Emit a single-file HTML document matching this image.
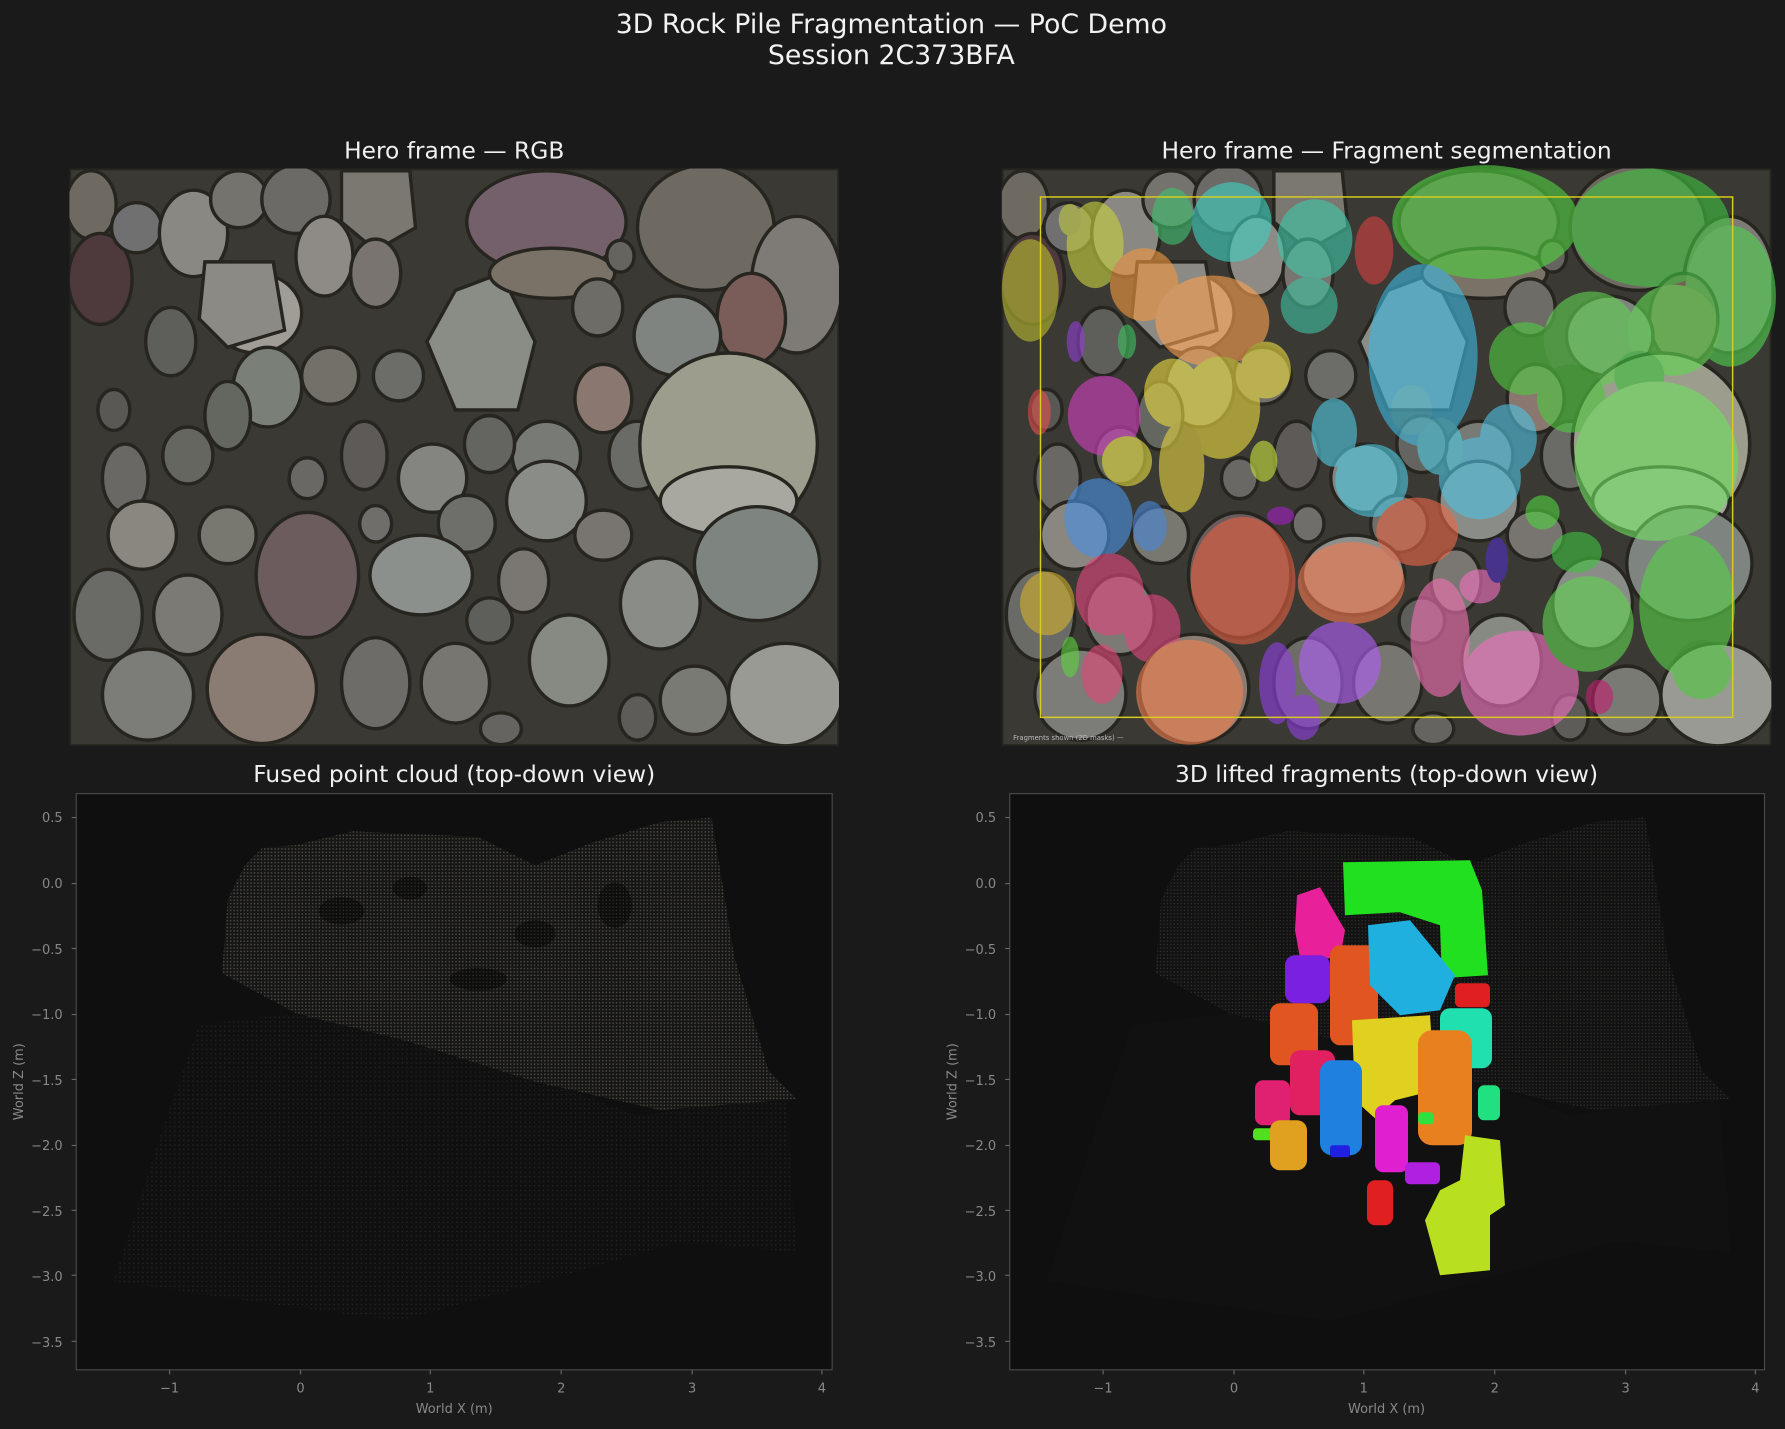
<!DOCTYPE html>
<html><head><meta charset="utf-8"><style>
html,body{margin:0;padding:0;background:#1a1a1a;}
svg{display:block;}
text{font-family:"DejaVu Sans","Liberation Sans",sans-serif;}
</style></head><body>
<svg width="1785" height="1429" viewBox="0 0 1568 1255" preserveAspectRatio="none" xmlns="http://www.w3.org/2000/svg">
<defs>
<clipPath id="imgclip"><rect x="61" y="148" width="676" height="507"/></clipPath>
<pattern id="dots" width="3" height="3" patternUnits="userSpaceOnUse"><rect width="3" height="3" fill="#161615"/><rect x="1" y="1" width="1.2" height="1.2" fill="#55524c"/></pattern>
<pattern id="dots2" width="4" height="4" patternUnits="userSpaceOnUse"><rect width="4" height="4" fill="#101010"/><rect x="1" y="1" width="1" height="1" fill="#2c2b28"/></pattern>
<pattern id="dots3" width="3" height="3" patternUnits="userSpaceOnUse"><rect width="3" height="3" fill="#121212"/><rect x="1" y="1" width="1.1" height="1.1" fill="#353431"/></pattern>
<g id="rocks" stroke="#26251f" stroke-width="3">
<rect x="61" y="148" width="676" height="507" fill="#3a3934"/>
<ellipse cx="80" cy="180" rx="22" ry="30" fill="#6e6a62"/>
<ellipse cx="88" cy="245" rx="28" ry="40" fill="#4e3a3c"/>
<ellipse cx="120" cy="200" rx="22" ry="22" fill="#707070"/>
<ellipse cx="170" cy="205" rx="30" ry="38" fill="#8a8882"/>
<ellipse cx="210" cy="175" rx="25" ry="25" fill="#75736d"/>
<ellipse cx="260" cy="175" rx="30" ry="30" fill="#6c6a66"/>
<polygon points="300,150 360,150 365,200 330,220 300,195" fill="#7a7870"/>
<ellipse cx="285" cy="225" rx="25" ry="35" fill="#8e8b86"/>
<ellipse cx="225" cy="275" rx="40" ry="35" fill="#a09d96"/>
<polygon points="180,230 240,230 250,290 200,305 175,280" fill="#8c8a85"/>
<ellipse cx="150" cy="300" rx="22" ry="30" fill="#5e5e5a"/>
<ellipse cx="330" cy="240" rx="22" ry="30" fill="#7a7470"/>
<polygon points="400,255 440,240 470,300 455,360 400,360 375,300" fill="#8a8c86"/>
<ellipse cx="480" cy="195" rx="70" ry="45" fill="#74606a"/>
<ellipse cx="485" cy="240" rx="55" ry="22" fill="#7a7266"/>
<ellipse cx="620" cy="200" rx="60" ry="55" fill="#6e6a62"/>
<ellipse cx="700" cy="250" rx="40" ry="60" fill="#7e7a76"/>
<ellipse cx="660" cy="280" rx="30" ry="40" fill="#7a5c58"/>
<ellipse cx="595" cy="295" rx="38" ry="35" fill="#7f8480"/>
<ellipse cx="525" cy="270" rx="22" ry="25" fill="#6e6c66"/>
<ellipse cx="235" cy="340" rx="30" ry="35" fill="#7a8078"/>
<ellipse cx="200" cy="365" rx="20" ry="30" fill="#646660"/>
<ellipse cx="290" cy="330" rx="25" ry="25" fill="#727068"/>
<ellipse cx="350" cy="330" rx="22" ry="22" fill="#6c6c68"/>
<ellipse cx="530" cy="350" rx="25" ry="30" fill="#8a7870"/>
<ellipse cx="560" cy="400" rx="25" ry="30" fill="#6a6a66"/>
<ellipse cx="640" cy="390" rx="78" ry="80" fill="#9c9d8c"/>
<ellipse cx="640" cy="440" rx="60" ry="30" fill="#a8a8a0"/>
<ellipse cx="480" cy="400" rx="30" ry="30" fill="#787a76"/>
<ellipse cx="430" cy="390" rx="22" ry="25" fill="#646460"/>
<ellipse cx="380" cy="420" rx="30" ry="30" fill="#848480"/>
<ellipse cx="320" cy="400" rx="20" ry="30" fill="#5e5a58"/>
<ellipse cx="165" cy="400" rx="22" ry="25" fill="#666660"/>
<ellipse cx="110" cy="420" rx="20" ry="30" fill="#6a6864"/>
<ellipse cx="125" cy="470" rx="30" ry="30" fill="#8a8680"/>
<ellipse cx="480" cy="440" rx="35" ry="35" fill="#8a8c88"/>
<ellipse cx="410" cy="460" rx="25" ry="25" fill="#6e6e6a"/>
<ellipse cx="270" cy="505" rx="45" ry="55" fill="#6c5c5e"/>
<ellipse cx="370" cy="505" rx="45" ry="35" fill="#8c908c"/>
<ellipse cx="200" cy="470" rx="25" ry="25" fill="#787870"/>
<ellipse cx="165" cy="540" rx="30" ry="35" fill="#7c7a74"/>
<ellipse cx="95" cy="540" rx="30" ry="40" fill="#6a6a66"/>
<ellipse cx="460" cy="510" rx="22" ry="28" fill="#7a7672"/>
<ellipse cx="530" cy="470" rx="25" ry="22" fill="#787470"/>
<ellipse cx="665" cy="495" rx="55" ry="50" fill="#7e8480"/>
<ellipse cx="580" cy="530" rx="35" ry="40" fill="#8a8c88"/>
<ellipse cx="500" cy="580" rx="35" ry="40" fill="#868a82"/>
<ellipse cx="230" cy="605" rx="48" ry="48" fill="#8a7c72"/>
<ellipse cx="130" cy="610" rx="40" ry="40" fill="#7c7c78"/>
<ellipse cx="330" cy="600" rx="30" ry="40" fill="#6e6c68"/>
<ellipse cx="400" cy="600" rx="30" ry="35" fill="#787670"/>
<ellipse cx="690" cy="610" rx="50" ry="45" fill="#9a9a94"/>
<ellipse cx="610" cy="615" rx="30" ry="30" fill="#7a7a74"/>
<ellipse cx="430" cy="545" rx="20" ry="20" fill="#5e5e5a"/>
<ellipse cx="100" cy="360" rx="14" ry="18" fill="#5a5854"/>
<ellipse cx="270" cy="420" rx="16" ry="18" fill="#6a6864"/>
<ellipse cx="545" cy="225" rx="12" ry="14" fill="#66645e"/>
<ellipse cx="330" cy="460" rx="14" ry="16" fill="#706e6a"/>
<ellipse cx="440" cy="640" rx="18" ry="14" fill="#666460"/>
<ellipse cx="560" cy="630" rx="16" ry="20" fill="#5e5c58"/>
</g>
</defs>

<text x="783" y="29" font-size="23.5" fill="#f2f2f2" text-anchor="middle">3D Rock Pile Fragmentation — PoC Demo</text>
<text x="783" y="56" font-size="23.5" fill="#f2f2f2" text-anchor="middle">Session 2C373BFA</text>

<text x="399" y="139" font-size="20.5" fill="#f0f0f0" text-anchor="middle">Hero frame — RGB</text>
<text x="1218" y="139" font-size="20.5" fill="#f0f0f0" text-anchor="middle">Hero frame — Fragment segmentation</text>

<g clip-path="url(#imgclip)"><use href="#rocks"/></g>
<g transform="translate(819,0)"><g clip-path="url(#imgclip)"><use href="#rocks"/></g></g>

<g opacity="0.62">
<ellipse cx="905" cy="255" rx="25" ry="45" fill="#b8b830"/>
<ellipse cx="962" cy="215" rx="25" ry="38" fill="#c8d040"/>
<ellipse cx="940" cy="193" rx="10" ry="14" fill="#c0c840"/>
<ellipse cx="1030" cy="190" rx="18" ry="25" fill="#40c070"/>
<ellipse cx="1082" cy="195" rx="35" ry="35" fill="#40d0c0"/>
<ellipse cx="1155" cy="210" rx="33" ry="35" fill="#40c8a8"/>
<ellipse cx="1150" cy="268" rx="25" ry="25" fill="#40c0a0"/>
<ellipse cx="1207" cy="220" rx="17" ry="30" fill="#d04040"/>
<ellipse cx="1305" cy="195" rx="82" ry="50" fill="#50d040"/>
<ellipse cx="1450" cy="200" rx="70" ry="52" fill="#40c040"/>
<ellipse cx="1520" cy="260" rx="40" ry="62" fill="#50d050"/>
<ellipse cx="1005" cy="250" rx="30" ry="32" fill="#f09840"/>
<ellipse cx="1065" cy="282" rx="50" ry="40" fill="#f8a050"/>
<ellipse cx="1250" cy="312" rx="48" ry="80" fill="#40b8e0"/>
<ellipse cx="945" cy="300" rx="8" ry="18" fill="#9040d0"/>
<ellipse cx="990" cy="300" rx="8" ry="15" fill="#40c060"/>
<ellipse cx="970" cy="365" rx="32" ry="35" fill="#d040c0"/>
<ellipse cx="1030" cy="345" rx="25" ry="30" fill="#e8d840"/>
<ellipse cx="1072" cy="358" rx="35" ry="45" fill="#e8d840"/>
<ellipse cx="1112" cy="325" rx="22" ry="25" fill="#e8d840"/>
<ellipse cx="990" cy="405" rx="22" ry="22" fill="#e0d840"/>
<ellipse cx="1038" cy="410" rx="20" ry="40" fill="#e0d040"/>
<ellipse cx="1110" cy="405" rx="12" ry="18" fill="#c8e040"/>
<ellipse cx="1340" cy="315" rx="32" ry="32" fill="#50c840"/>
<ellipse cx="1398" cy="298" rx="42" ry="42" fill="#60d050"/>
<ellipse cx="1470" cy="290" rx="40" ry="40" fill="#60d850"/>
<ellipse cx="1440" cy="330" rx="22" ry="22" fill="#40c040"/>
<ellipse cx="1380" cy="350" rx="30" ry="30" fill="#50c840"/>
<ellipse cx="1455" cy="405" rx="72" ry="70" fill="#70e060"/>
<ellipse cx="1172" cy="380" rx="20" ry="30" fill="#50c8e0"/>
<ellipse cx="1205" cy="422" rx="32" ry="32" fill="#50c8e0"/>
<ellipse cx="1300" cy="420" rx="36" ry="36" fill="#50c0e0"/>
<ellipse cx="1325" cy="385" rx="25" ry="30" fill="#50c0e0"/>
<ellipse cx="1265" cy="392" rx="20" ry="25" fill="#50c8e0"/>
<ellipse cx="1240" cy="360" rx="18" ry="22" fill="#50c0d8"/>
<ellipse cx="965" cy="455" rx="30" ry="35" fill="#4890e0"/>
<ellipse cx="1010" cy="462" rx="15" ry="22" fill="#4888d8"/>
<ellipse cx="1092" cy="510" rx="46" ry="56" fill="#e06040"/>
<ellipse cx="1187" cy="512" rx="47" ry="36" fill="#f07850"/>
<ellipse cx="1245" cy="467" rx="36" ry="30" fill="#e86848"/>
<ellipse cx="975" cy="522" rx="30" ry="36" fill="#e04880"/>
<ellipse cx="1012" cy="552" rx="25" ry="30" fill="#e04880"/>
<ellipse cx="968" cy="592" rx="18" ry="26" fill="#e04878"/>
<ellipse cx="1045" cy="608" rx="47" ry="46" fill="#f08050"/>
<ellipse cx="1177" cy="582" rx="36" ry="36" fill="#b060f8"/>
<ellipse cx="1122" cy="600" rx="16" ry="36" fill="#9040e0"/>
<ellipse cx="1145" cy="630" rx="15" ry="20" fill="#9040e0"/>
<ellipse cx="1265" cy="560" rx="26" ry="52" fill="#f070b0"/>
<ellipse cx="1335" cy="600" rx="52" ry="46" fill="#f070c0"/>
<ellipse cx="1300" cy="515" rx="18" ry="15" fill="#f070c0"/>
<ellipse cx="1482" cy="532" rx="42" ry="62" fill="#58d048"/>
<ellipse cx="1395" cy="548" rx="40" ry="42" fill="#60d050"/>
<ellipse cx="1495" cy="588" rx="26" ry="26" fill="#50c840"/>
<ellipse cx="1385" cy="485" rx="22" ry="18" fill="#40c040"/>
<ellipse cx="1355" cy="450" rx="15" ry="15" fill="#50d040"/>
<ellipse cx="920" cy="530" rx="24" ry="28" fill="#d0b030"/>
<ellipse cx="940" cy="577" rx="8" ry="18" fill="#60d040"/>
<ellipse cx="1315" cy="492" rx="10" ry="20" fill="#5030c0"/>
<ellipse cx="1125" cy="453" rx="12" ry="8" fill="#a020c0"/>
<ellipse cx="913" cy="362" rx="10" ry="20" fill="#e05050"/>
<ellipse cx="1405" cy="612" rx="12" ry="15" fill="#c02070"/>
</g>
<rect x="914" y="173" width="608" height="457" fill="none" stroke="#d8cc20" stroke-width="1.3"/>
<text x="890" y="650" font-size="6" fill="#bbb">Fragments shown (2D masks) —</text>

<text x="399" y="687" font-size="20.5" fill="#f0f0f0" text-anchor="middle">Fused point cloud (top-down view)</text>
<text x="1218" y="687" font-size="20.5" fill="#f0f0f0" text-anchor="middle">3D lifted fragments (top-down view)</text>

<rect x="67" y="697" width="664" height="506" fill="#0f0f0f" stroke="#4a4a4a" stroke-width="1"/>
<polygon points="100,1125 140,1000 175,900 260,890 400,920 560,980 690,960 700,1100 600,1090 460,1130 350,1160 200,1140" fill="url(#dots2)"/>
<polygon points="230,745 260,742 310,730 420,735 470,760 520,740 580,722 625,718 632,760 645,840 675,940 700,965 580,975 470,950 360,915 260,890 195,855 200,790 215,760" fill="url(#dots)"/>
<g opacity="0.4" fill="#000"><ellipse cx="300" cy="800" rx="20" ry="12"/><ellipse cx="420" cy="860" rx="25" ry="10"/><ellipse cx="540" cy="795" rx="15" ry="20"/><ellipse cx="360" cy="780" rx="15" ry="10"/><ellipse cx="470" cy="820" rx="18" ry="12"/></g>

<g font-size="11.4" fill="#888" text-anchor="end">
<text x="55" y="722">0.5</text><text x="55" y="780">0.0</text><text x="55" y="838">−0.5</text><text x="55" y="895">−1.0</text><text x="55" y="953">−1.5</text><text x="55" y="1010">−2.0</text><text x="55" y="1068">−2.5</text><text x="55" y="1125">−3.0</text><text x="55" y="1183">−3.5</text>
</g>
<g stroke="#666"><line x1="63" y1="718" x2="67" y2="718"/><line x1="63" y1="776" x2="67" y2="776"/><line x1="63" y1="833" x2="67" y2="833"/><line x1="63" y1="891" x2="67" y2="891"/><line x1="63" y1="948" x2="67" y2="948"/><line x1="63" y1="1006" x2="67" y2="1006"/><line x1="63" y1="1063" x2="67" y2="1063"/><line x1="63" y1="1120" x2="67" y2="1120"/><line x1="63" y1="1178" x2="67" y2="1178"/>
<line x1="149" y1="1203" x2="149" y2="1207"/><line x1="264" y1="1203" x2="264" y2="1207"/><line x1="378" y1="1203" x2="378" y2="1207"/><line x1="493" y1="1203" x2="493" y2="1207"/><line x1="608" y1="1203" x2="608" y2="1207"/><line x1="722" y1="1203" x2="722" y2="1207"/></g>
<g font-size="11.4" fill="#888" text-anchor="middle">
<text x="149" y="1223">−1</text><text x="264" y="1223">0</text><text x="378" y="1223">1</text><text x="493" y="1223">2</text><text x="608" y="1223">3</text><text x="722" y="1223">4</text>
<text x="399" y="1241">World X (m)</text>
</g>
<text transform="translate(20,950) rotate(-90)" font-size="11.4" fill="#888" text-anchor="middle">World Z (m)</text>

<rect x="887" y="697" width="663" height="506" fill="#0f0f0f" stroke="#4a4a4a" stroke-width="1"/>
<g transform="translate(820,0)">
<polygon points="100,1125 140,1000 175,900 260,890 400,920 560,980 690,960 700,1100 600,1090 460,1130 350,1160 200,1140" fill="#111" opacity="0.8"/>
<polygon points="230,745 260,742 310,730 420,735 470,760 520,740 580,722 625,718 632,760 645,840 675,940 700,965 580,975 470,950 360,915 260,890 195,855 200,790 215,760" fill="url(#dots3)"/>
</g>
<g transform="scale(0.87843)">
<path d="M1343,862 L1470,860 L1482,890 L1488,975 L1442,978 L1440,925 L1400,912 L1345,915 Z" fill="#20e020"/>
<path d="M1297,895 L1320,887 L1345,930 L1340,958 L1300,958 L1295,930 Z" fill="#e8209a"/>
<rect x="1285" y="955" width="45" height="48" rx="10" fill="#7a20e0"/>
<rect x="1330" y="945" width="48" height="100" rx="10" fill="#e05520"/>
<rect x="1270" y="1003" width="48" height="62" rx="10" fill="#e05520"/>
<path d="M1368,925 L1410,920 L1455,975 L1440,1010 L1400,1015 L1370,985 Z" fill="#20b0e0"/>
<rect x="1455" y="983" width="35" height="24" rx="5" fill="#e02020"/>
<rect x="1440" y="1008" width="52" height="60" rx="10" fill="#20e0b0"/>
<path d="M1352,1020 L1430,1015 L1435,1090 L1395,1100 L1375,1118 L1355,1100 Z" fill="#e0d020"/>
<rect x="1418" y="1030" width="54" height="115" rx="14" fill="#e88020"/>
<rect x="1290" y="1050" width="45" height="65" rx="10" fill="#e02060"/>
<rect x="1255" y="1080" width="35" height="45" rx="8" fill="#e02070"/>
<rect x="1320" y="1060" width="42" height="95" rx="12" fill="#2080e0"/>
<rect x="1375" y="1105" width="33" height="67" rx="8" fill="#e020d0"/>
<rect x="1405" y="1162" width="35" height="22" rx="5" fill="#b020e0"/>
<rect x="1418" y="1112" width="16" height="12" rx="4" fill="#30e040"/>
<rect x="1253" y="1128" width="26" height="12" rx="4" fill="#50e020"/>
<rect x="1478" y="1085" width="22" height="35" rx="6" fill="#20e080"/>
<rect x="1270" y="1120" width="37" height="50" rx="10" fill="#e0a020"/>
<rect x="1367" y="1180" width="26" height="45" rx="8" fill="#e02020"/>
<path d="M1465,1135 L1500,1140 L1505,1205 L1490,1215 L1490,1270 L1440,1275 L1425,1220 L1440,1190 L1460,1180 Z" fill="#b8e020"/>
<rect x="1330" y="1145" width="20" height="12" rx="3" fill="#2020e0"/>
</g>

<g font-size="11.4" fill="#888" text-anchor="end">
<text x="875" y="722">0.5</text><text x="875" y="780">0.0</text><text x="875" y="838">−0.5</text><text x="875" y="895">−1.0</text><text x="875" y="953">−1.5</text><text x="875" y="1010">−2.0</text><text x="875" y="1068">−2.5</text><text x="875" y="1125">−3.0</text><text x="875" y="1183">−3.5</text>
</g>
<g stroke="#666"><line x1="883" y1="718" x2="887" y2="718"/><line x1="883" y1="776" x2="887" y2="776"/><line x1="883" y1="833" x2="887" y2="833"/><line x1="883" y1="891" x2="887" y2="891"/><line x1="883" y1="948" x2="887" y2="948"/><line x1="883" y1="1006" x2="887" y2="1006"/><line x1="883" y1="1063" x2="887" y2="1063"/><line x1="883" y1="1120" x2="887" y2="1120"/><line x1="883" y1="1178" x2="887" y2="1178"/>
<line x1="969" y1="1203" x2="969" y2="1207"/><line x1="1084" y1="1203" x2="1084" y2="1207"/><line x1="1198" y1="1203" x2="1198" y2="1207"/><line x1="1313" y1="1203" x2="1313" y2="1207"/><line x1="1428" y1="1203" x2="1428" y2="1207"/><line x1="1542" y1="1203" x2="1542" y2="1207"/></g>
<g font-size="11.4" fill="#888" text-anchor="middle">
<text x="969" y="1223">−1</text><text x="1084" y="1223">0</text><text x="1198" y="1223">1</text><text x="1313" y="1223">2</text><text x="1428" y="1223">3</text><text x="1542" y="1223">4</text>
<text x="1218" y="1241">World X (m)</text>
</g>
<text transform="translate(840,950) rotate(-90)" font-size="11.4" fill="#888" text-anchor="middle">World Z (m)</text>
</svg>
</body></html>
